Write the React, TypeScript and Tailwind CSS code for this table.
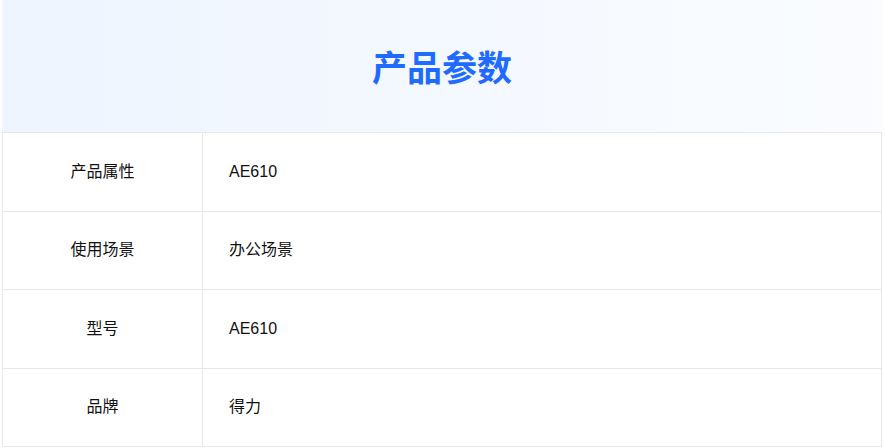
const rows = [
  { label: '产品属性', value: 'AE610' },
  { label: '使用场景', value: '办公场景' },
  { label: '型号', value: 'AE610' },
  { label: '品牌', value: '得力' },
];

export default function App() {
  return (
    <div
      className="w-[885px] h-[448px] bg-white pl-[2px] pr-[3px]"
      style={{ fontFamily: '"Liberation Sans", "Noto Sans CJK SC", sans-serif' }}
    >
      <div className="h-[132px] flex items-center justify-center bg-gradient-to-r from-[#eef5ff] to-[#fafcff]">
        <h1 className="text-[35px] font-bold text-[#1f6bff] tracking-[0px]" style={{ fontFamily: '"Noto Sans CJK SC", sans-serif' }}>
          产品参数
        </h1>
      </div>
      <div className="border-l border-r border-t border-[#e8e8e8]">
        {rows.map((row) => (
          <div key={row.label} className="flex h-[78.5px] border-b border-[#e8e8e8]">
            <div className="w-[200px] flex items-center justify-center border-r border-[#e8e8e8] text-[16px] text-[#111]">
              {row.label}
            </div>
            <div className="flex-1 flex items-center pl-[26px] text-[16px] text-[#111]">
              {row.value}
            </div>
          </div>
        ))}
      </div>
    </div>
  );
}
